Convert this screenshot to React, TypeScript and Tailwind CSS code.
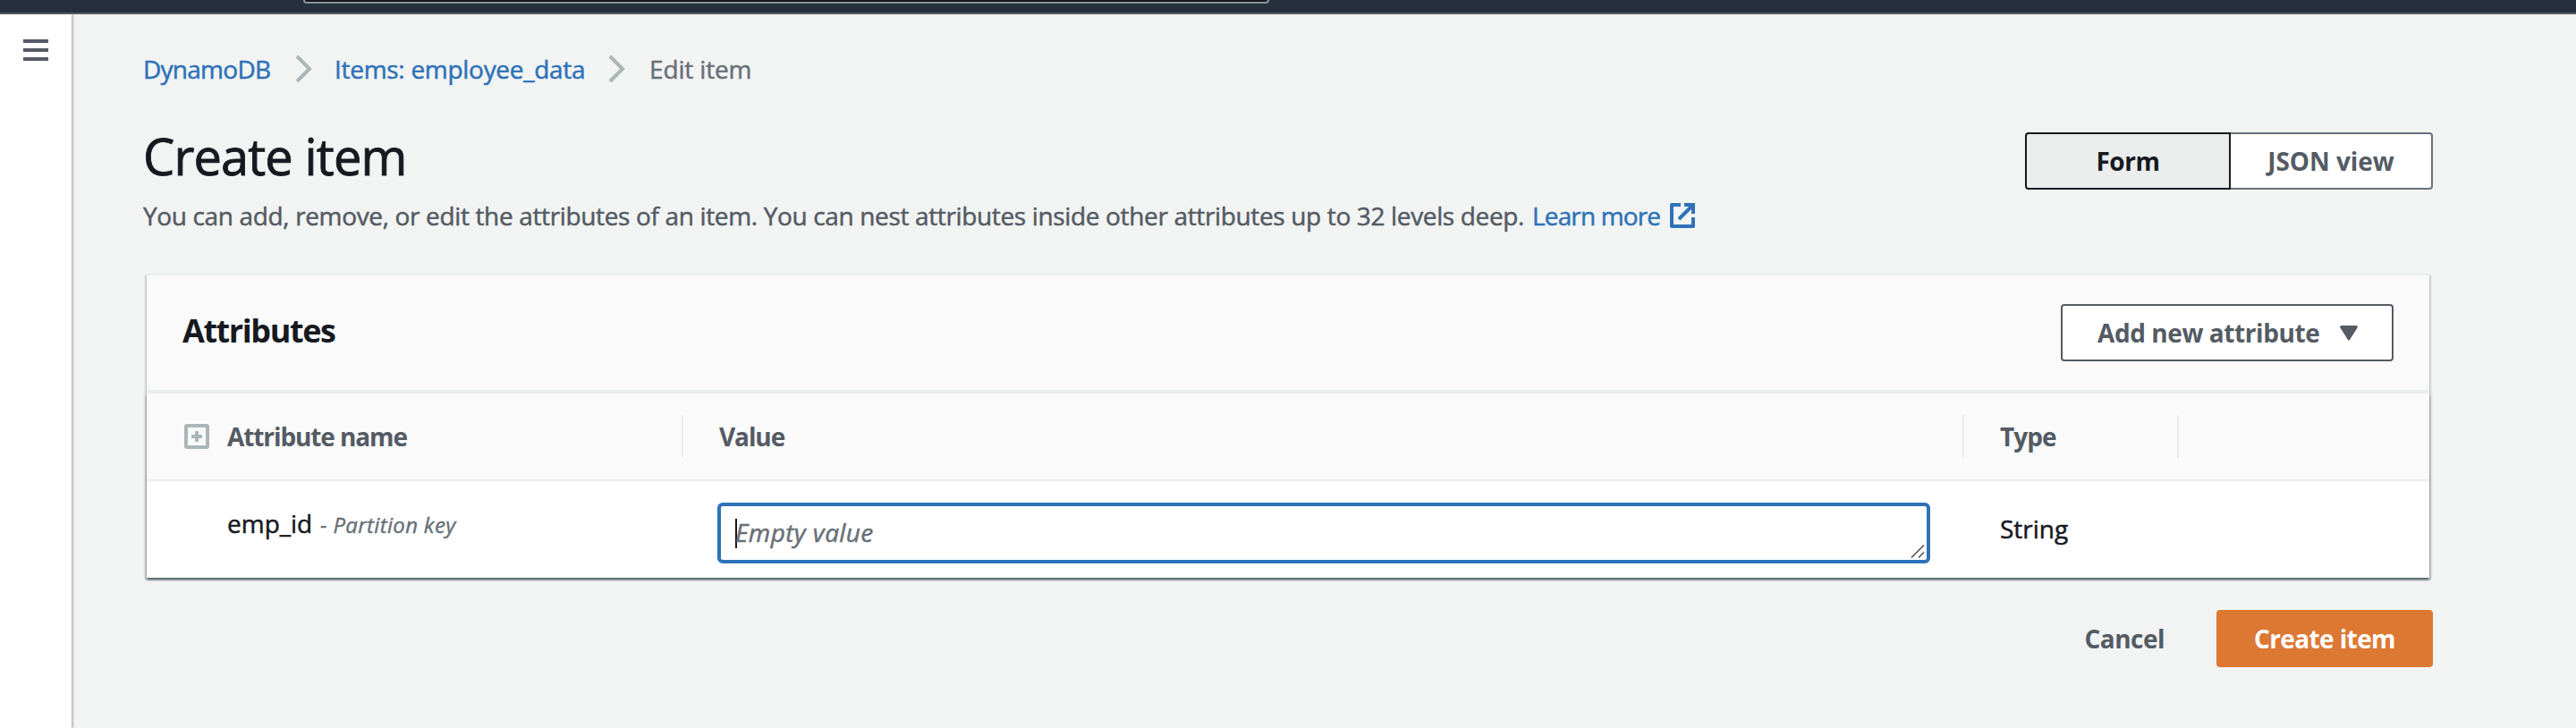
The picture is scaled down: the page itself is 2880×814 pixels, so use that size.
import type { ReactNode } from "react";

function Chevron() {
  return (
    <svg width="20" height="32" viewBox="0 0 20 32" fill="none" stroke="#aab7b8" strokeWidth="4">
      <path d="M2 2L16 16L2 30" />
    </svg>
  );
}

function ExternalIcon() {
  return (
    <svg width="28" height="28" viewBox="0 0 28 28" fill="none" stroke="#2e72b8" strokeWidth="4">
      <path d="M12 2H2V26H26V16" strokeLinejoin="round" />
      <path d="M16 2H26V12" />
      <path d="M26 2L10 18" />
    </svg>
  );
}

function ExpandIcon() {
  return (
    <svg width="28" height="28" viewBox="0 0 28 28" fill="none" stroke="#aab7b8" strokeWidth="4">
      <rect x="2" y="2" width="24" height="24" rx="1" />
      <path d="M8 14H20M14 8V20" />
    </svg>
  );
}

function HeaderCell({ className, children }: { className: string; children?: ReactNode }) {
  return <div className={`flex h-12 items-center ${className}`}>{children}</div>;
}

export default function App() {
  return (
    <div className="flex h-[814px] w-[2880px] flex-col overflow-hidden bg-[#f2f4f3] font-['Open_Sans','Noto_Sans',sans-serif] text-[28px] leading-[44px] text-[#16191f]">
      <header className="h-4 shrink-0 border-b-2 border-[#545b64] bg-[#262f3e] pl-[339px]">
        <div className="h-1 w-[1080px] rounded-b-[4px] border-x-2 border-b-2 border-[#879596] bg-[#16191f]" />
      </header>

      <div className="flex flex-1">
        <aside className="w-20 shrink-0 bg-white pl-[26px] pt-7 shadow-[2px_0_2px_0_rgba(0,28,36,0.25)]">
          <div className="flex w-7 flex-col gap-1.5">
            <span className="h-1 bg-[#545b64]" />
            <span className="h-1 bg-[#545b64]" />
            <span className="h-1 bg-[#545b64]" />
          </div>
        </aside>

        <main className="w-[2640px] pl-20 pt-[39px]">
          <nav className="flex h-11 items-center whitespace-nowrap text-[#2e72b8] [-webkit-text-stroke:0.5px]">
            <a className="w-[170px] tracking-[-0.74px]">DynamoDB</a>
            <Chevron />
            <a className="ml-6 w-[306px] tracking-[-0.29px]">Items: employee_data</a>
            <Chevron />
            <span className="ml-[26px] tracking-[-0.15px] text-[#687078]">Edit item</span>
          </nav>

          <div className="mt-[39px] flex justify-between">
            <div>
              <h1 className="text-[56px] leading-[72px] tracking-[-0.87px] [-webkit-text-stroke:0.9px]">Create item</h1>
              <p className="mt-[9px] flex items-center whitespace-nowrap text-[#545b64] [-webkit-text-stroke:0.5px]">
                <span className="w-[1553px] tracking-[-0.35px]">
                  You can add, remove, or edit the attributes of an item. You can nest attributes inside other attributes up to 32 levels deep.
                </span>
                <a className="flex items-center tracking-[-0.85px] text-[#2e72b8]">
                  <span className="w-[154px]">Learn more</span>
                  <ExternalIcon />
                </a>
              </p>
            </div>
            <div className="mt-2.5 flex h-16 font-bold">
              <button className="w-[230px] rounded-l-[4px] border-2 border-[#16191f] bg-[#ebedec] tracking-[-0.47px]">Form</button>
              <button className="w-[226px] rounded-r-[4px] border-2 border-l-0 border-[#687078] bg-white tracking-[-0.05px] text-[#545b64]">
                JSON view
              </button>
            </div>
          </div>

          <section className="mx-1 mt-[43px] border-t-2 border-[#eaeded] shadow-[0_2px_2px_0_rgba(0,28,36,0.25),2px_2px_2px_0_rgba(0,28,36,0.12),-2px_2px_2px_0_rgba(0,28,36,0.12)]">
            <div className="flex h-[132px] items-center justify-between border-b-4 border-[#eaeded] bg-[#fafafa] px-10">
              <h2 className="pb-1 text-[36px] font-bold tracking-[-1.42px]">Attributes</h2>
              <button className="flex h-16 w-[372px] items-center rounded-[4px] border-2 border-[#545b64] bg-white pl-[39px] font-bold text-[#545b64]">
                <span className="w-[271px] text-left tracking-[-0.42px]">Add new attribute</span>
                <svg width="20" height="17" viewBox="0 0 20 17" fill="#545b64">
                  <path d="M1.5 0H18.5Q20.5 0.5 19.5 2.5L11 16Q10 17.4 9 16L0.5 2.5Q-0.5 0.5 1.5 0Z" />
                </svg>
              </button>
            </div>

            <div className="shadow-[0_3px_2px_0_rgba(0,28,36,0.25),2px_2px_2px_0_rgba(0,28,36,0.12),-2px_2px_2px_0_rgba(0,28,36,0.12)]">
              <div className="flex h-[98px] items-center border-b-2 border-[#eaeded] bg-[#fafafa] font-bold text-[#545b64]">
                <HeaderCell className="w-[600px] border-r-2 border-[#eaeded] pl-[42px]">
                  <ExpandIcon />
                  <span className="ml-5 tracking-[-1.1px]">Attribute name</span>
                </HeaderCell>
                <HeaderCell className="w-[1432px] border-r-2 border-[#eaeded] pl-10">
                  <span className="tracking-[-1.1px]">Value</span>
                </HeaderCell>
                <HeaderCell className="w-[240px] border-r-2 border-[#eaeded] pl-10">
                  <span className="tracking-[-0.95px]">Type</span>
                </HeaderCell>
              </div>

              <div className="flex h-[108px] bg-white [-webkit-text-stroke:0.5px]">
                <div className="flex w-[600px] items-baseline pl-[90px] pt-[25px]">
                  <span className="w-[104px]">emp_id</span>
                  <span className="text-[24px] italic tracking-[0.33px] text-[#687078] [-webkit-text-stroke:0.4px]">- Partition key</span>
                </div>
                <div className="w-[1432px] pl-[38px] pt-6">
                  <div className="relative flex h-[68px] w-[1356px] items-center rounded-[6px] border-4 border-[#2e72b8] bg-white pl-4">
                    <span className="h-[33px] w-0.5 bg-[#16191f]" />
                    <span className="-ml-0.5 pb-0.5 italic tracking-[0.4px] text-[#687078]">Empty value</span>
                    <svg className="absolute bottom-0.5 right-0.5" width="16" height="16" viewBox="0 0 16 16" stroke="#545454" strokeWidth="1.6">
                      <path d="M1 15.5L15 1.5M9 15.5L15 9.5" />
                    </svg>
                  </div>
                </div>
                <div className="pl-10 pt-[31px]">String</div>
              </div>
            </div>
          </section>

          <div className="mt-9 flex justify-end font-bold">
            <button className="mr-[58px] h-16 tracking-[-0.52px] text-[#545b64]">Cancel</button>
            <button className="h-16 w-[242px] rounded-[4px] bg-[#dd7833] tracking-[-0.62px] text-white">Create item</button>
          </div>
        </main>
      </div>
    </div>
  );
}
